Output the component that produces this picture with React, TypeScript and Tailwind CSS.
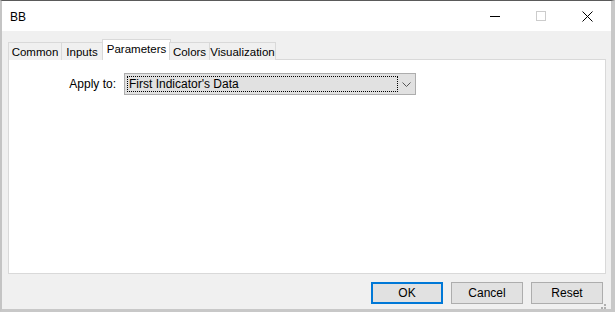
import React from "react";

const tabs = [
  { label: "Common", w: "w-[54px]" },
  { label: "Inputs", w: "w-[42px]" },
  { label: "Parameters", w: "w-[69px]", active: true },
  { label: "Colors", w: "w-[41px]" },
  { label: "Visualization", w: "w-[67px]" },
];

function TitleBar() {
  return (
    <div className="h-[30px] bg-white flex items-center shrink-0">
      <span className="pl-[8px] pt-px text-[12px] text-black">BB</span>
      <div className="ml-auto mr-[1px] flex items-center h-full">
        <div className="w-[46px] h-full flex items-center justify-center">
          <div className="w-[10px] h-px bg-black" />
        </div>
        <div className="w-[46px] h-full flex items-center justify-center">
          <div className="w-[10px] h-[10px] border border-[#cccccc]" />
        </div>
        <div className="w-[46px] h-full flex items-center justify-center">
          <svg width="11" height="11" viewBox="0 0 11 11">
            <path d="M0.5 0.5 L10.5 10.5 M10.5 0.5 L0.5 10.5" stroke="#000" strokeWidth="1" />
          </svg>
        </div>
      </div>
    </div>
  );
}

function Btn({ label, primary }: { label: string; primary?: boolean }) {
  return (
    <button
      className={
        "w-[72px] h-[22px] bg-[#e1e1e1] text-[12px] text-black flex items-center justify-center " +
        (primary ? "border-2 border-[#0078d7]" : "border border-[#adadad]")
      }
    >
      {label}
    </button>
  );
}

export default function App() {
  return (
    <div
      className="w-[615px] h-[312px] flex flex-col bg-[#f0f0f0] border-t border-t-[#5a5a5a] border-l-2 border-l-[#c4c4c4] border-r-4 border-r-[#c8c8c8] border-b-3 border-b-[#c8c8c8] overflow-hidden"
      style={{ fontFamily: '"Liberation Sans", Arial, sans-serif' }}
    >
      <TitleBar />
      <div className="flex-1 flex flex-col pl-[6px] pr-[5px] pt-[8px]">
        {/* tab strip */}
        <div className="flex items-end h-[21px] relative z-10">
          {tabs.map((t) =>
            t.active ? (
              <div
                key={t.label}
                className={`${t.w} h-[21px] bg-white border border-b-0 border-[#d9d9d9] -mx-px flex items-start justify-center pt-[2px] text-[11.5px] text-black leading-[15px] whitespace-nowrap`}
              >
                {t.label}
              </div>
            ) : (
              <div
                key={t.label}
                className={`${t.w} h-[18px] bg-[#f0f0f0] border border-b-0 border-[#d9d9d9] -ml-px first:ml-0 flex items-center justify-center pt-px text-[11.5px] text-black leading-[15px] whitespace-nowrap`}
              >
                {t.label}
              </div>
            )
          )}
        </div>
        {/* panel */}
        <div className="h-[215px] bg-white border border-[#d9d9d9] -mt-px pt-[13px]">
          <div className="flex items-center">
            <div className="w-[115px] text-right text-[12px] text-black pr-[8px]">Apply to:</div>
            <div className="w-[292px] h-[22px] bg-[#e1e1e1] border border-[#adadad] flex items-center pl-[2px]">
              <div className="w-[271px] h-[16px] border border-dotted border-black flex items-center pl-px text-[12px] text-black">
                First Indicator's Data
              </div>
              <div className="flex-1 flex items-center justify-center">
                <svg width="9" height="5" viewBox="0 0 9 5">
                  <path d="M0.5 0.5 L4.5 4.5 L8.5 0.5" stroke="#555" fill="none" strokeWidth="1" />
                </svg>
              </div>
            </div>
          </div>
        </div>
        {/* buttons */}
        <div className="flex justify-end gap-[8px] pr-[3px] mt-[8px]">
          <Btn label="OK" primary />
          <Btn label="Cancel" />
          <Btn label="Reset" />
        </div>
        <div className="flex-1 flex justify-end items-end">
          <svg width="8" height="8" viewBox="0 0 8 8" className="mb-px">
            <g fill="#b0b0b0">
              <rect x="6" y="0" width="2" height="2" />
              <rect x="3" y="3" width="2" height="2" />
              <rect x="6" y="3" width="2" height="2" />
              <rect x="0" y="6" width="2" height="2" />
              <rect x="3" y="6" width="2" height="2" />
              <rect x="6" y="6" width="2" height="2" />
            </g>
          </svg>
        </div>
      </div>
    </div>
  );
}
